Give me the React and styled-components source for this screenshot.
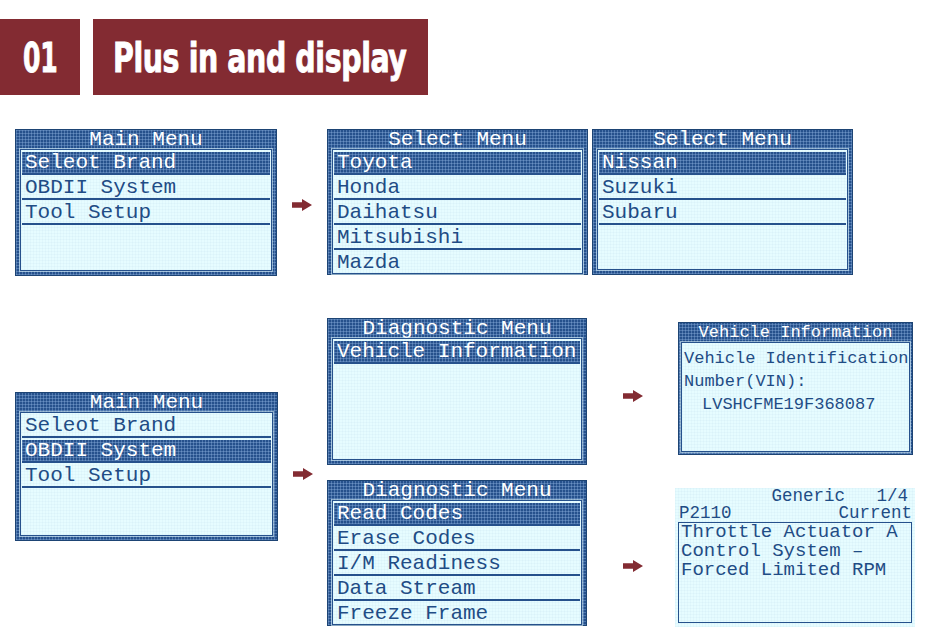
import React from 'react';
import styled, { createGlobalStyle, css } from 'styled-components';

const NAVY = '#26518c';
const EDGE = '#1d4474';
const INK = '#1f4c85';
const LCD = '#e6fcff';
const MAROON = '#832b32';

const gridTexture = css`
  background-color: ${NAVY};
  background-image:
    repeating-linear-gradient(0deg, rgba(150, 186, 230, 0.36) 0 1px, transparent 1px 3px),
    repeating-linear-gradient(90deg, rgba(150, 186, 230, 0.36) 0 1px, transparent 1px 3px);
`;

const lcdTexture = css`
  background-color: ${LCD};
  background-image:
    repeating-linear-gradient(0deg, rgba(60, 110, 170, 0.035) 0 1px, transparent 1px 3px),
    repeating-linear-gradient(90deg, rgba(60, 110, 170, 0.035) 0 1px, transparent 1px 3px);
`;

const GlobalStyle = createGlobalStyle`
  html, body { margin: 0; padding: 0; background: #fff; }
  #root { width: 930px; height: 631px; overflow: hidden; }
`;

const Page = styled.div`
  padding-top: 19px;
  font-family: "Liberation Mono", "DejaVu Sans Mono", monospace;
`;

/* ---- section heading ---- */
const Header = styled.header`
  display: flex;
  gap: 13px;
  height: 76px;
`;

const Tag = styled.div`
  box-sizing: border-box;
  width: ${p => p.$w}px;
  background: ${MAROON};
  color: #fff;
  display: flex;
  align-items: center;
  justify-content: ${p => (p.$center ? 'center' : 'flex-start')};
  padding-left: ${p => p.$indent || 0}px;
  overflow: hidden;
  font-family: "DejaVu Sans Condensed", "DejaVu Sans", sans-serif;
  font-weight: 700;
  font-size: 41px;
  line-height: 1;
  white-space: nowrap;
`;

/* heavy condensed lettering for the heading */
const TagText = styled.span`
  display: inline-block;
  transform: scaleX(${p => p.$scale});
  transform-origin: ${p => (p.$center ? 'center' : 'left')} center;
  letter-spacing: -0.5px;
  margin-top: 2px;
  -webkit-text-stroke: 0.9px #fff;
`;

/* ---- layout ---- */
const Content = styled.main`
  padding-left: 15px;
`;

const TopRow = styled.section`
  margin-top: 34px;
  display: flex;
  align-items: flex-start;
`;

const BottomGrid = styled.section`
  margin-top: 42px;
  display: grid;
  grid-template-columns: 263px 49px 260px 88px 240px;
  grid-template-rows: 147px 145px;
  row-gap: 15px;
`;

const Cell = styled.div`
  grid-column: ${p => p.$col};
  grid-row: ${p => p.$row};
  align-self: ${p => p.$align || 'start'};
  margin: ${p => p.$m || '0'};
`;

const ArrowCell = styled.div`
  grid-column: ${p => p.$col || 'auto'};
  grid-row: ${p => p.$row || 'auto'};
  width: ${p => (p.$w ? `${p.$w}px` : 'auto')};
  align-self: center;
  margin-top: ${p => p.$shift || 0}px;
  display: flex;
  justify-content: center;
  padding-left: ${p => p.$pl || 0}px;
`;

const Arrow = () => (
  <svg width="20" height="12" viewBox="0 0 20 12">
    <polygon points="0,3.2 10,3.2 10,0 20,6 10,12 10,8.8 0,8.8" fill={MAROON} />
  </svg>
);

/* ---- LCD screens ---- */
const Frame = styled.div`
  ${gridTexture};
  box-sizing: border-box;
  width: ${p => p.$w}px;
  height: ${p => p.$h}px;
  border: 1px solid ${EDGE};
  padding: 0 ${p => p.$pad}px ${p => p.$padBottom ?? p.$pad}px;
  display: flex;
  flex-direction: column;
  margin-left: ${p => p.$ml || 0}px;
`;

const FrameTitle = styled.div`
  height: 19px;
  line-height: 19px;
  color: #fff;
  text-align: center;
  font-size: ${p => p.$size}px;
  white-space: pre;
`;

const Panel = styled.div`
  ${lcdTexture};
  flex: 1;
  min-height: 0;
  overflow: hidden;
  border: 1px solid ${NAVY};
  box-shadow: 0 0 0 1px rgba(228, 251, 255, 0.55);
  padding: ${p => p.$padTop || 0}px 1px 0;
`;

const MenuRow = styled.div`
  height: 21px;
  line-height: 21px;
  margin-top: 2px;
  padding-left: 3px;
  font-size: 21px;
  white-space: pre;
  color: ${INK};
  border-bottom: ${p => (p.$closing ? 'none' : `2px solid ${NAVY}`)};
  ${p =>
    p.$selected &&
    css`
      ${gridTexture};
      color: #fff;
    `}
`;

const InfoLine = styled.div`
  height: 23px;
  line-height: 23px;
  font-size: 17px;
  white-space: pre;
  color: ${INK};
  padding-left: ${p => p.$indent || 1}px;
`;

const CodeScreen = styled.div`
  ${lcdTexture};
  box-sizing: border-box;
  width: 240px;
  height: 139px;
  display: flex;
  flex-direction: column;
  color: ${INK};
`;

const CodeHead = styled.div`
  height: 17px;
  line-height: 17px;
  font-size: 17.5px;
  white-space: pre;
  display: flex;
  justify-content: ${p => (p.$spread ? 'space-between' : 'flex-end')};
  padding: 0 ${p => p.$pr}px 0 4px;
`;

const CodeBox = styled.div`
  flex: 1;
  margin: 0 3px 4px;
  border: 1px solid ${NAVY};
  padding-left: 2px;
`;

const CodeLine = styled.div`
  height: 19px;
  line-height: 19px;
  font-size: 19px;
  white-space: pre;
`;

function MenuScreen({ title, items, selected, w, h, ml, full }) {
  return (
    <Frame $w={w} $h={h} $pad={4} $padBottom={full ? 0 : 4} $ml={ml}>
      <FrameTitle $size={21}>{title}</FrameTitle>
      <Panel>
        {items.map((it, i) => (
          <MenuRow
            key={it}
            $selected={i === selected}
            $closing={full && i === items.length - 1}
          >
            {it}
          </MenuRow>
        ))}
      </Panel>
    </Frame>
  );
}

export default function App() {
  return (
    <>
      <GlobalStyle />
      <Page>
        <Header>
          <Tag $w={80} $center>
            <TagText $scale={0.68} $center>01</TagText>
          </Tag>
          <Tag $w={335} $indent={20}>
            <TagText $scale={0.77}>Plus in and display</TagText>
          </Tag>
        </Header>

        <Content>
          <TopRow>
            <MenuScreen
              title="Main Menu"
              items={['Seleot Brand', 'OBDII System', 'Tool Setup']}
              selected={0}
              w={262}
              h={147}
            />
            <ArrowCell $w={50} $shift={5}>
              <Arrow />
            </ArrowCell>
            <MenuScreen
              title="Select Menu"
              items={['Toyota', 'Honda', 'Daihatsu', 'Mitsubishi', 'Mazda']}
              selected={0}
              w={261}
              h={146}
              full
            />
            <MenuScreen
              title="Select Menu"
              items={['Nissan', 'Suzuki', 'Subaru']}
              selected={0}
              w={261}
              h={146}
              ml={4}
            />
          </TopRow>

          <BottomGrid>
            <Cell $col="1" $row="1 / 3" $align="center" $m="0 0 10px 0">
              <MenuScreen
                title="Main Menu"
                items={['Seleot Brand', 'OBDII System', 'Tool Setup']}
                selected={1}
                w={263}
                h={149}
              />
            </Cell>
            <ArrowCell $col="2" $row="1 / 3" $shift={5}>
              <Arrow />
            </ArrowCell>

            <Cell $col="3" $row="1">
              <MenuScreen
                title="Diagnostic Menu"
                items={['Vehicle Information']}
                selected={0}
                w={260}
                h={147}
              />
            </Cell>
            <Cell $col="3" $row="2">
              <MenuScreen
                title="Diagnostic Menu"
                items={['Read Codes', 'Erase Codes', 'I/M Readiness', 'Data Stream', 'Freeze Frame']}
                selected={0}
                w={260}
                h={146}
                full
              />
            </Cell>

            <ArrowCell $col="4" $row="1" $shift={9} $pl={4}>
              <Arrow />
            </ArrowCell>
            <ArrowCell $col="4" $row="2" $shift={27} $pl={4}>
              <Arrow />
            </ArrowCell>

            <Cell $col="5" $row="1" $m="4px 2px 0 3px">
              <Frame $w={235} $h={133} $pad={2}>
                <FrameTitle $size={17}>Vehicle Information</FrameTitle>
                <Panel $padTop={4}>
                  <InfoLine>Vehicle Identification</InfoLine>
                  <InfoLine>Number(VIN):</InfoLine>
                  <InfoLine $indent={19}>LVSHCFME19F368087</InfoLine>
                </Panel>
              </Frame>
            </Cell>

            <Cell $col="5" $row="2" $m="8px 0 0 0">
              <CodeScreen>
                <CodeHead $pr={7}>{'Generic   1/4'}</CodeHead>
                <CodeHead $spread $pr={3}>
                  <span>P2110</span>
                  <span>Current</span>
                </CodeHead>
                <CodeBox>
                  <CodeLine>Throttle Actuator A</CodeLine>
                  <CodeLine>Control System –</CodeLine>
                  <CodeLine>Forced Limited RPM</CodeLine>
                </CodeBox>
              </CodeScreen>
            </Cell>
          </BottomGrid>
        </Content>
      </Page>
    </>
  );
}
